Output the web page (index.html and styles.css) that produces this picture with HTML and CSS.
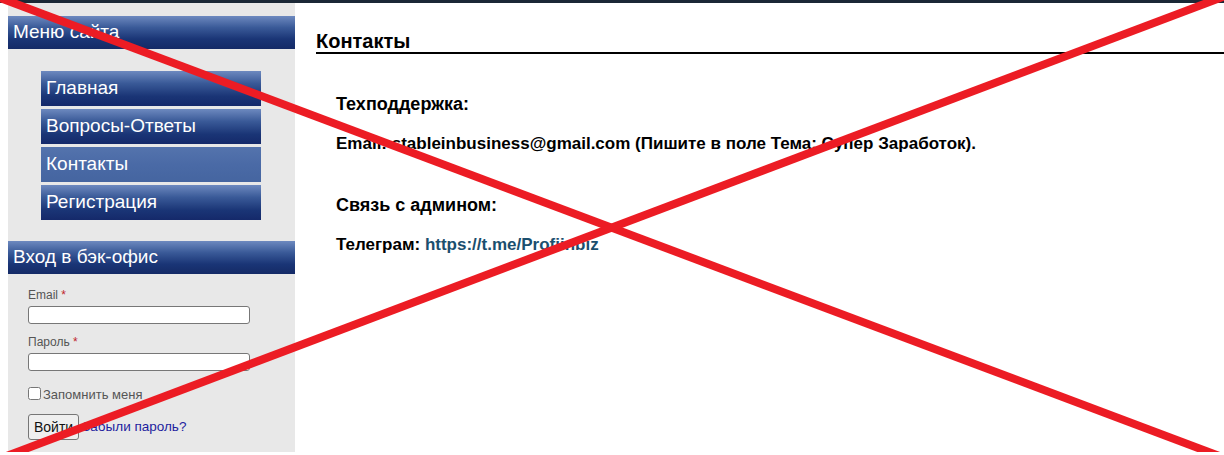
FILE: index.html
```
<!DOCTYPE html>
<html lang="ru">
<head>
  <meta charset="UTF-8" />
  <title>Контакты</title>
  <link rel="stylesheet" href="styles.css">
</head>
<body>
  <div class="page">
    <aside class="sidebar">
      <div class="block-title">Меню сайта</div>
      <ul class="menu">
        <li><a href="#">Главная</a></li>
        <li><a href="#">Вопросы-Ответы</a></li>
        <li class="active"><a href="#">Контакты</a></li>
        <li><a href="#">Регистрация</a></li>
      </ul>

      <div class="block-title">Вход в бэк-офис</div>
      <form class="login">
        <label for="email">Email <span class="req">*</span></label>
        <input type="text" id="email" />
        <label for="pass">Пароль <span class="req">*</span></label>
        <input type="password" id="pass" />
        <div class="remember">
          <input type="checkbox" id="remember" />
          <label for="remember">Запомнить меня</label>
        </div>
        <div class="actions">
          <button type="button">Войти</button><a href="#">Забыли пароль?</a>
        </div>
      </form>
    </aside>

    <main class="content">
      <h1>Контакты</h1>
      <div class="text">
        <h3>Техподдержка:</h3>
        <p class="mail">Email: stableinbusiness@gmail.com (Пишите в поле Тема: Супер Заработок).</p>
        <h3>Связь с админом:</h3>
        <p>Телеграм: <a href="#">https://t.me/Profiinbiz</a></p>
      </div>
    </main>
  </div>

  <svg class="cross" width="1224" height="455" viewBox="0 0 1224 455">
    <line x1="-5" y1="-4" x2="1230" y2="460" />
    <line x1="-4" y1="460" x2="1228" y2="-5" />
  </svg>
</body>
</html>
```
FILE: styles.css
```
* {
  box-sizing: border-box;
}

body {
  margin: 0;
  font-family: "Liberation Sans", Arial, sans-serif;
  background: #fff;
  color: #000;
  overflow: hidden;
  position: relative;
}

.page {
  display: flex;
  border-top: 3px solid #1b2836;
  min-height: 452px;
}

.sidebar {
  width: 287px;
  margin-left: 8px;
  background: #e8e8e8;
  padding-top: 13px;
}

.block-title {
  height: 33px;
  padding: 5px 0 0 5px;
  font-size: 19px;
  line-height: 22px;
  color: #fff;
  background: linear-gradient(to bottom, #6d89bf 0%, #3a5a98 35%, #1a3576 70%, #142a66 100%);
}

.menu {
  list-style: none;
  margin: 0;
  padding: 22px 0 21px 33px;
  display: flex;
  flex-direction: column;
  gap: 3px;
}

.menu li a {
  display: block;
  width: 220px;
  height: 35px;
  padding: 6px 0 0 5px;
  font-size: 19px;
  line-height: 22px;
  color: #fff;
  text-decoration: none;
  background: linear-gradient(to bottom, #6d89bf 0%, #3a5a98 35%, #1a3576 72%, #15296a 100%);
}

.menu li.active a {
  background: linear-gradient(to bottom, #5473ad 0%, #4a6aa6 50%, #4565a0 100%);
}

.login {
  padding: 14px 0 0 20px;
  display: flex;
  flex-direction: column;
  font-size: 12px;
  line-height: 14px;
  color: #555;
}

.login label {
  margin-bottom: 4px;
}

.req {
  color: #c0262c;
}

.login input[type="text"],
.login input[type="password"] {
  width: 222px;
  height: 18px;
  border: 1px solid #777;
  border-radius: 3px;
  background: #fff;
  margin: 0 0 11px 0;
}

.remember {
  display: flex;
  align-items: center;
  margin-top: 4px;
  height: 14px;
}

.remember input {
  margin: 0 2px 0 0;
  width: 13px;
  height: 13px;
}

.remember label {
  font-size: 13px;
  margin: 3px 0 0 0;
}

.actions {
  margin-top: 14px;
  display: flex;
  align-items: center;
}

.actions button {
  font-family: inherit;
  font-size: 14px;
  height: 26px;
  padding: 0 5px;
  background: #efefef;
  border: 1px solid #767676;
  border-radius: 3px;
  color: #111;
}

.actions a {
  color: #1d1d9e;
  font-size: 13.5px;
  text-decoration: none;
  margin-left: 3px;
}

.content {
  flex: 1;
  padding: 27px 0 0 21px;
}

.content h1 {
  margin: 0;
  font-size: 20px;
  line-height: 22px;
  font-weight: bold;
  border-bottom: 2px solid #000;
}

.text {
  padding: 40px 0 0 20px;
}

.text h3 {
  margin: 0 0 20px 0;
  font-size: 18px;
  line-height: 20px;
}

.text p {
  margin: 0 0 19px 0;
  font-size: 17px;
  line-height: 20px;
  font-weight: bold;
}

.text p.mail {
  margin-bottom: 41px;
}

.text a {
  color: #1b4f6e;
  text-decoration: none;
}

.cross {
  position: absolute;
  left: 0;
  top: 0;
  pointer-events: none;
}

.cross line {
  stroke: #ec1c24;
  stroke-width: 8;
}
```
